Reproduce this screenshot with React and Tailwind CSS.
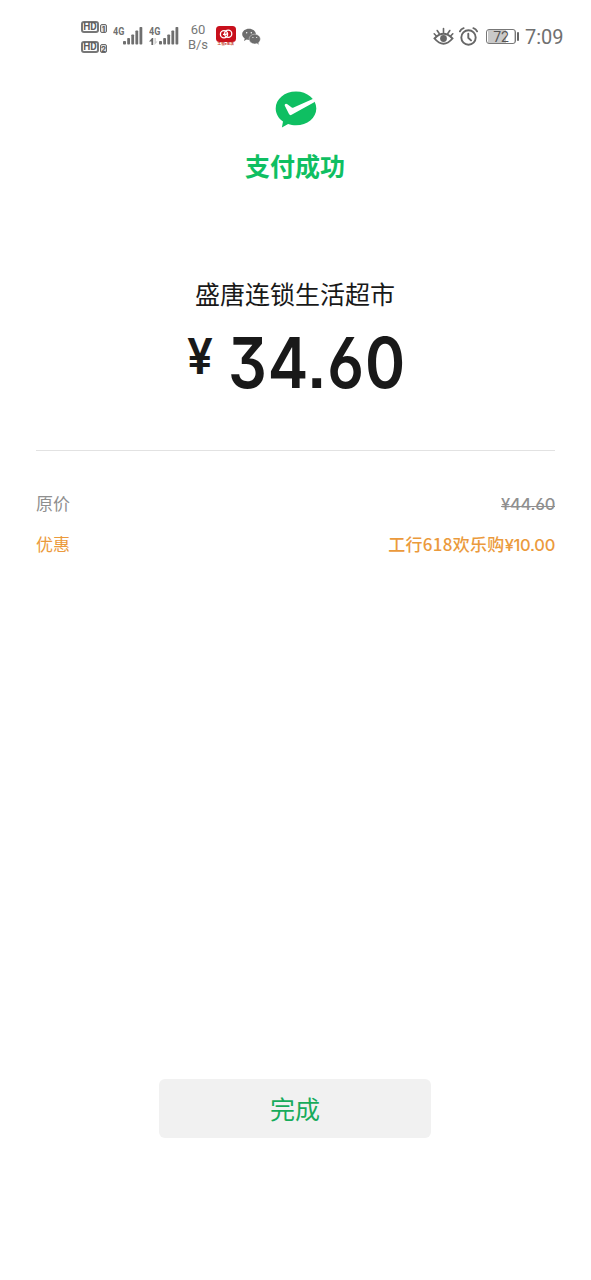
const DETAILS = [
  { id: 'original', label: '原价', name: '', price: '¥44.60', row: 'text-[#8f8f8f]', valueStyle: 'line-through' },
  { id: 'discount', label: '优惠', name: '工行618欢乐购', price: '¥10.00', row: 'text-[#eb9a3c]', valueStyle: 'font-medium' },
];

function HdBadge({ slot }) {
  return (
    <div className="flex h-3 items-end gap-px leading-none text-[#606060]">
      <span className="flex h-[12px] w-[18px] items-center justify-center self-start rounded-[3px] border-2 border-[#777] font-['Roboto'] text-[10px] font-bold">HD</span>
      <span className="flex h-[9px] w-[7px] items-center justify-center rounded-[2px] border border-[#6b6b6b] bg-[#ddd] font-['Inter'] text-[8px] font-bold">{slot}</span>
    </div>
  );
}

function Signal({ arrows }) {
  return (
    <div className="flex h-[19px] w-[30px]">
      <div className="flex w-[10px] flex-col">
        <span className="h-[11px] w-[14px] origin-left scale-x-[.82] font-['Roboto'] text-[11px] font-bold leading-[11px] text-[#707070]">4G</span>
        {arrows && (
          <svg className="mt-px h-[7px] w-[10px] shrink-0" viewBox="0 0 10 7">
            <path d="M0 3.500 3 0h1.200v7H2.400V3.500z" fill="#666" />
            <path d="M5.500 0v7l3-3.500H6.800V0z" fill="#ccc" />
          </svg>
        )}
      </div>
      <svg className="h-[19px] w-[20px]" viewBox="0 0 20 19" fill="#6f6f6f">
        <rect x="0" y="15" width="3" height="3.500" rx=".8" />
        <rect x="4.200" y="12" width="2.800" height="6.500" rx=".8" />
        <rect x="8.300" y="8.500" width="2.800" height="10" rx=".8" />
        <rect x="12.400" y="4.500" width="2.800" height="14" rx=".8" />
        <rect x="16.500" y="1" width="2.800" height="17.500" rx=".8" />
      </svg>
    </div>
  );
}

function BankIcon() {
  return (
    <div className="ml-[6px] mt-[26px] w-5">
      <svg className="h-4 w-5" viewBox="0 0 20 16">
        <rect width="20" height="16" rx="3.500" fill="#c8101c" />
        <g fill="none" stroke="#fff" strokeWidth="1.300">
          <circle cx="8" cy="8.300" r="3.600" />
          <circle cx="12.200" cy="7.800" r="3.600" />
          <path d="M7 8.300h3l2-1" />
        </g>
      </svg>
      <span className="block h-1 w-10 origin-top-left scale-[.4] whitespace-nowrap pl-1 text-[9px] font-bold leading-[10px] text-[#c8402c]">工银e生活</span>
    </div>
  );
}

function WechatIcon() {
  return (
    <svg className="ml-[6px] mt-[28px] h-[18px] w-[19px]" viewBox="0 0 19 18">
      <path d="M7 .8C3.200.8.2 3.200.2 6.300c0 1.700 1 3.200 2.500 4.200L2 13l2.700-1.400c4.400 1.200 9.200-1.500 9.200-5.300C13.900 3.200 10.800.8 7 .8z" fill="#6d6d6d" />
      <path d="M12.700 6.200c-3.200 0-5.600 2.100-5.600 4.800s2.400 4.900 5.600 4.900c.8 0 1.500-.1 2.200-.4l2.200 1.400-.6-2.200c1.100-.9 1.900-2.200 1.900-3.700 0-2.700-2.600-4.800-5.700-4.800z" fill="#6d6d6d" stroke="#fff" strokeWidth=".4" />
      <g fill="#fff">
        <circle cx="4.700" cy="4.700" r=".7" />
        <circle cx="9.300" cy="4.700" r=".7" />
        <circle cx="10.900" cy="9.500" r=".6" />
        <circle cx="14.700" cy="9.500" r=".6" />
      </g>
    </svg>
  );
}

function EyeIcon() {
  return (
    <svg className="mt-[27px] h-[19px] w-[21px]" viewBox="0 0 21 19" fill="none" stroke="#676767" strokeWidth="1.900" strokeLinecap="round">
      <path d="M1.500 11.500Q10.500 2 19.500 11.500Q10.500 22 1.500 11.500z" />
      <circle cx="10.500" cy="11.500" r="3.400" fill="#676767" stroke="none" />
      <path d="M10.500 1.500v4M4.200 3.500l2 3M16.800 3.500l-2 3M1.200 6.800l2.200 2.200M19.800 6.800l-2.200 2.200" strokeWidth="1.600" />
    </svg>
  );
}

function AlarmIcon() {
  return (
    <svg className="ml-[5px] mt-[27px] h-[19px] w-[19px]" viewBox="0 0 19 19" fill="none" stroke="#676767" strokeWidth="1.900" strokeLinecap="round">
      <circle cx="9.500" cy="10.500" r="7.200" />
      <path d="M9.300 6.800v4l2.700 2.600M.9 4.300Q2 1.900 4.600 1.100M18.100 4.300Q17 1.900 14.400 1.100" />
    </svg>
  );
}

function StatusBar() {
  return (
    <div className="flex h-[60px] pl-[81px] pr-[28px] font-['Roboto','Noto_Sans_CJK_SC',sans-serif]">
      <div className="mt-[21px] flex w-[32px] flex-col gap-2">
        <HdBadge slot="1" />
        <HdBadge slot="2" />
      </div>
      <div className="mt-[26px] flex gap-[6px]">
        <Signal />
        <Signal arrows />
      </div>
      <div className="ml-[7px] mt-[22px] w-[24px] text-center text-[13px] leading-[15px] text-[#777]">
        <div>60</div>
        <div className="whitespace-nowrap">B/s</div>
      </div>
      <BankIcon />
      <WechatIcon />
      <div className="ml-auto flex">
        <EyeIcon />
        <AlarmIcon />
        <div className="ml-[8px] mt-[29px] flex items-start">
          <div className="flex h-[15px] w-[30px] items-center justify-center rounded-[3px] border border-[#777] bg-linear-to-r from-[#c9c9c9] from-70% to-white to-70% bg-origin-content p-px text-[14px] leading-none text-[#555]">72</div>
          <div className="ml-px mt-[3px] h-[9px] w-[2px] rounded-sm bg-[#666]" />
        </div>
        <div className="ml-[6px] mt-[26px] w-[38px] whitespace-nowrap text-[20px] leading-[22px] text-[#707070]">7:09</div>
      </div>
    </div>
  );
}

function PayLogo() {
  return (
    <svg className="h-[37px] w-[42px]" viewBox="0 0 42 37">
      <path d="M21 .5C9.700.5.7 8 .7 17.400c0 5.300 2.800 9.900 7.300 13L6.900 36.400l6.200-3.500c2.500.9 5.100 1.400 7.900 1.400 11.300 0 20.300-7.600 20.300-16.900S32.300.5 21 .5z" fill="#0fbf62" />
      <path d="M9.800 13.500c.8-1 1.800-.8 2.600-.2l4.300 3.200c.6.4 1.200.4 1.900.1L37.300 8.500l2.200 2.800-22.900 12.500c-1.200.7-2 .4-2.600-.8L9.700 14.600z" fill="#0fbf62" />
      <path d="M9.800 13.500c.8-1 1.800-.8 2.600-.2l4.300 3.200c.6.4 1.200.4 1.900.1L38.300 7.800l1.800 3-23.500 13c-1.200.7-2 .4-2.600-.8L9.700 14.600z" fill="#fff" />
    </svg>
  );
}

export default function App() {
  return (
    <div className="flex h-[1280px] w-[591px] flex-col overflow-hidden bg-white font-['Noto_Sans_CJK_SC',sans-serif]">
      <StatusBar />

      <div className="flex flex-col items-center pt-[31px]">
        <PayLogo />
        <h1 className="mt-[19px] pr-px text-[25px] font-bold leading-[36px] text-[#0fbf62]">支付成功</h1>
      </div>

      <div className="mt-[92px] flex flex-col items-center text-[#191919]">
        <p className="pr-px text-[25px] leading-[36px]">盛唐连锁生活超市</p>
        {/* flat-top three, open six, square dot */}
        <div className="mt-[16px] flex h-[72px] w-[218px] items-start justify-between font-['Inter'] font-semibold [font-feature-settings:'cv09','cv03','ss07']">
          <span className="w-[27px] origin-left scale-x-[.92] pt-[3px] text-[50px] leading-[52px]">¥</span>
          <span className="w-[177px] origin-left scale-x-[.87] whitespace-nowrap text-[70px] leading-[72px] tracking-[1px]">34.60</span>
        </div>
      </div>

      <div className="mx-[36px] mt-[51px] border-t border-[#e2e2e2] pt-[40px] text-[17px]">
        {DETAILS.map(d => (
          <div key={d.id} className={`mb-[17px] flex h-6 items-center justify-between leading-6 ${d.row}`}>
            <span>{d.label}</span>
            <span className={d.valueStyle}>
              <span className="tracking-[.3px]">{d.name}</span>
              <span className="font-['Inter'] text-[16.5px] font-medium tracking-[-.3px] [font-feature-settings:'cv09','cv03','ss07']">{d.price}</span>
            </span>
          </div>
        ))}
      </div>

      <button className="mb-[142px] ml-[159px] mt-auto h-[59px] w-[272px] rounded-md bg-[#f1f1f1] pt-px text-[25px] text-[#17ab5b]">完成</button>
    </div>
  );
}
